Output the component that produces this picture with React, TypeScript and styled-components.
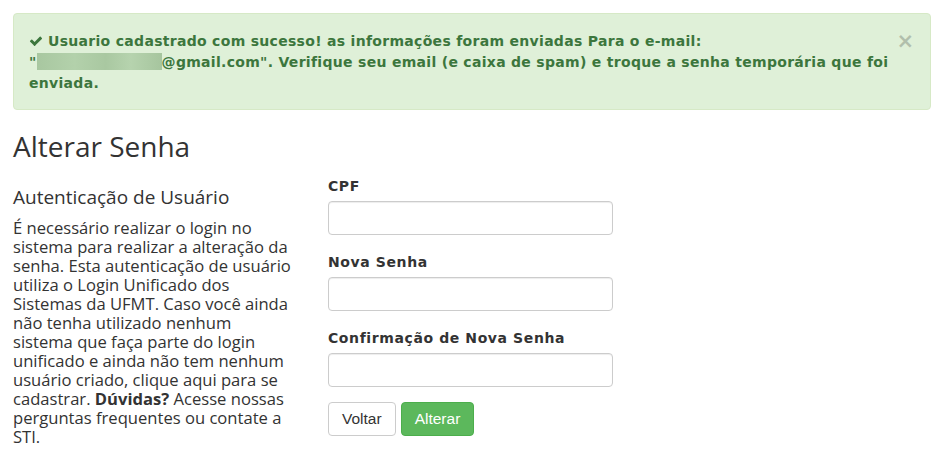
import React from "react";
import styled, { createGlobalStyle } from "styled-components";

const Global = createGlobalStyle`
  html, body { margin: 0; padding: 0; background: #fff; }
  body { font-family: "Open Sans", "Noto Sans", sans-serif; color: #333; }
  * { box-sizing: border-box; }
`;

const Page = styled.div`
  width: 947px;
  padding: 13px 16px 0 13px;
`;

const Alert = styled.div`
  position: relative;
  background: #dff0d8;
  border: 1px solid #d6e9c6;
  border-radius: 4px;
  color: #3c763d;
  padding: 17px 35px 15px 15px;
  margin-bottom: 20px;
  font-family: "DejaVu Sans", Verdana, sans-serif;
  font-weight: bold;
  font-size: 14px;
  letter-spacing: 0.3px;
  line-height: 21px;
`;

const CheckIcon = styled.svg`
  width: 14px;
  height: 14px;
  margin-right: 5px;
  vertical-align: -2px;
  fill: #3c763d;
`;

const Email = styled.span`
  white-space: nowrap;
`;

const Blur = styled.span`
  display: inline-block;
  width: 125px;
  height: 17px;
  vertical-align: -3px;
  background: linear-gradient(90deg, #a8c7a0 0%, #b3d1ab 30%, #a9c8a1 55%, #b6d3ae 75%, #a6c59e 100%);
`;

const Close = styled.button`
  position: absolute;
  top: 17px;
  right: 16px;
  border: 0;
  background: none;
  padding: 0;
  font-family: "DejaVu Sans", sans-serif;
  font-size: 21px;
  line-height: 21px;
  font-weight: bold;
  color: #000;
  opacity: 0.2;
  cursor: pointer;
`;

const Title = styled.h2`
  margin: 0 0 10px 0;
  font-family: "Open Sans", sans-serif;
  font-weight: 400;
  font-size: 28px;
  line-height: 33px;
  color: #333;
`;

const Row = styled.div`
  display: grid;
  grid-template-columns: 281px 285px;
  column-gap: 34px;
  align-items: start;
`;

const Side = styled.div`
  padding-top: 12px;
`;

const SideTitle = styled.h4`
  margin: 0 0 9px 0;
  font-family: "Open Sans", sans-serif;
  font-weight: 400;
  font-size: 19px;
  line-height: 24px;
  color: #333;
`;

const SideText = styled.p`
  margin: 0;
  font-family: "Open Sans", sans-serif;
  font-size: 16.6px;
  line-height: 19px;
  color: #333;
  b { font-weight: 700; }
`;

const Form = styled.form`
  padding-top: 3px;
`;

const Group = styled.div`
  margin-bottom: 17px;
`;

const Label = styled.label`
  display: block;
  margin-bottom: 5px;
  font-family: "DejaVu Sans", Verdana, sans-serif;
  font-weight: bold;
  font-size: 14px;
  letter-spacing: 0.6px;
  line-height: 20px;
  color: #333;
`;

const Input = styled.input`
  display: block;
  width: 285px;
  height: 34px;
  padding: 6px 12px;
  border: 1px solid #ccc;
  border-radius: 4px;
  box-shadow: inset 0 1px 1px rgba(0, 0, 0, 0.075);
  font-size: 14px;
`;

const Actions = styled.div`
  display: flex;
  gap: 5px;
  margin-top: -2px;
`;

const Button = styled.button<{ $variant?: "default" | "success" }>`
  height: 34px;
  padding: 6px 13px;
  border-radius: 4px;
  font-family: "Liberation Sans", Arial, sans-serif;
  font-size: 15.5px;
  line-height: 20px;
  cursor: pointer;
  border: 1px solid ${(p) => (p.$variant === "success" ? "#4cae4c" : "#ccc")};
  background: ${(p) => (p.$variant === "success" ? "#5cb85c" : "#fff")};
  color: ${(p) => (p.$variant === "success" ? "#fff" : "#333")};
`;

export default function App() {
  return (
    <>
      <Global />
      <Page>
        <Alert>
          <CheckIcon viewBox="0 0 1792 1792" aria-hidden="true">
            <path d="M1671 566q0 40-28 68l-724 724-136 136q-28 28-68 28t-68-28l-136-136-362-362q-28-28-28-68t28-68l136-136q28-28 68-28t68 28l294 295 656-657q28-28 68-28t68 28l136 136q28 28 28 68z" />
          </CheckIcon>
          Usuario cadastrado com sucesso! as informações foram enviadas Para o e-mail:{" "}
          <Email>
            "<Blur />@gmail.com".
          </Email>{" "}
          Verifique seu email (e caixa de spam) e troque a senha temporária que foi enviada.
          <Close aria-label="Fechar">×</Close>
        </Alert>
        <Title>Alterar Senha</Title>
        <Row>
          <Side>
            <SideTitle>Autenticação de Usuário</SideTitle>
            <SideText>
              É necessário realizar o login no sistema para realizar a alteração da senha. Esta autenticação de
              usuário utiliza o Login Unificado dos Sistemas da UFMT. Caso você ainda não tenha utilizado nenhum
              sistema que faça parte do login unificado e ainda não tem nenhum usuário criado, clique aqui para se
              cadastrar. <b>Dúvidas?</b> Acesse nossas perguntas frequentes ou contate a STI.
            </SideText>
          </Side>
          <Form onSubmit={(e) => e.preventDefault()}>
            <Group>
              <Label>CPF</Label>
              <Input type="text" />
            </Group>
            <Group>
              <Label>Nova Senha</Label>
              <Input type="password" />
            </Group>
            <Group>
              <Label>Confirmação de Nova Senha</Label>
              <Input type="password" />
            </Group>
            <Actions>
              <Button type="button">Voltar</Button>
              <Button type="submit" $variant="success">Alterar</Button>
            </Actions>
          </Form>
        </Row>
      </Page>
    </>
  );
}
